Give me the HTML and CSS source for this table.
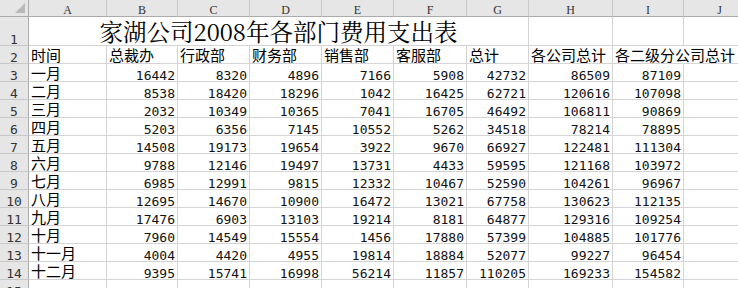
FILE: index.html
```html
<!DOCTYPE html>
<html lang="zh-CN">
<head>
<meta charset="utf-8">
<title>家湖公司2008年各部门费用支出表</title>
<link rel="stylesheet" href="styles.css">
</head>
<body>
<div class="sheet">
  <div class="corner"><svg width="28" height="16" viewBox="0 0 28 16"><polygon points="25,3 25,13 15,13" fill="#b9b9b9"/></svg></div>
  <div class="ch">A</div><div class="ch">B</div><div class="ch">C</div><div class="ch">D</div><div class="ch">E</div><div class="ch">F</div><div class="ch">G</div><div class="ch">H</div><div class="ch">I</div><div class="ch">J</div>

  <div class="rh r1">1</div>
  <div class="c title">家湖公司2008年各部门费用支出表</div>
  <div class="c r1"></div><div class="c r1"></div><div class="c r1"></div>

  <div class="rh">2</div>
  <div class="c">时间</div><div class="c">总裁办</div><div class="c">行政部</div><div class="c">财务部</div><div class="c">销售部</div><div class="c">客服部</div><div class="c">总计</div><div class="c">各公司总计</div><div class="c spill">各二级分公司总计</div><div class="c"></div>

  <div class="rh">3</div>
  <div class="c">一月</div><div class="c n">16442</div><div class="c n">8320</div><div class="c n">4896</div><div class="c n">7166</div><div class="c n">5908</div><div class="c n">42732</div><div class="c n">86509</div><div class="c n">87109</div><div class="c"></div>

  <div class="rh">4</div>
  <div class="c">二月</div><div class="c n">8538</div><div class="c n">18420</div><div class="c n">18296</div><div class="c n">1042</div><div class="c n">16425</div><div class="c n">62721</div><div class="c n">120616</div><div class="c n">107098</div><div class="c"></div>

  <div class="rh">5</div>
  <div class="c">三月</div><div class="c n">2032</div><div class="c n">10349</div><div class="c n">10365</div><div class="c n">7041</div><div class="c n">16705</div><div class="c n">46492</div><div class="c n">106811</div><div class="c n">90869</div><div class="c"></div>

  <div class="rh">6</div>
  <div class="c">四月</div><div class="c n">5203</div><div class="c n">6356</div><div class="c n">7145</div><div class="c n">10552</div><div class="c n">5262</div><div class="c n">34518</div><div class="c n">78214</div><div class="c n">78895</div><div class="c"></div>

  <div class="rh">7</div>
  <div class="c">五月</div><div class="c n">14508</div><div class="c n">19173</div><div class="c n">19654</div><div class="c n">3922</div><div class="c n">9670</div><div class="c n">66927</div><div class="c n">122481</div><div class="c n">111304</div><div class="c"></div>

  <div class="rh">8</div>
  <div class="c">六月</div><div class="c n">9788</div><div class="c n">12146</div><div class="c n">19497</div><div class="c n">13731</div><div class="c n">4433</div><div class="c n">59595</div><div class="c n">121168</div><div class="c n">103972</div><div class="c"></div>

  <div class="rh">9</div>
  <div class="c">七月</div><div class="c n">6985</div><div class="c n">12991</div><div class="c n">9815</div><div class="c n">12332</div><div class="c n">10467</div><div class="c n">52590</div><div class="c n">104261</div><div class="c n">96967</div><div class="c"></div>

  <div class="rh">10</div>
  <div class="c">八月</div><div class="c n">12695</div><div class="c n">14670</div><div class="c n">10900</div><div class="c n">16472</div><div class="c n">13021</div><div class="c n">67758</div><div class="c n">130623</div><div class="c n">112135</div><div class="c"></div>

  <div class="rh">11</div>
  <div class="c">九月</div><div class="c n">17476</div><div class="c n">6903</div><div class="c n">13103</div><div class="c n">19214</div><div class="c n">8181</div><div class="c n">64877</div><div class="c n">129316</div><div class="c n">109254</div><div class="c"></div>

  <div class="rh">12</div>
  <div class="c">十月</div><div class="c n">7960</div><div class="c n">14549</div><div class="c n">15554</div><div class="c n">1456</div><div class="c n">17880</div><div class="c n">57399</div><div class="c n">104885</div><div class="c n">101776</div><div class="c"></div>

  <div class="rh">13</div>
  <div class="c">十一月</div><div class="c n">4004</div><div class="c n">4420</div><div class="c n">4955</div><div class="c n">19814</div><div class="c n">18884</div><div class="c n">52077</div><div class="c n">99227</div><div class="c n">96454</div><div class="c"></div>

  <div class="rh">14</div>
  <div class="c">十二月</div><div class="c n">9395</div><div class="c n">15741</div><div class="c n">16998</div><div class="c n">56214</div><div class="c n">11857</div><div class="c n">110205</div><div class="c n">169233</div><div class="c n">154582</div><div class="c"></div>

  <div class="rh">15</div>
  <div class="c"></div><div class="c"></div><div class="c"></div><div class="c"></div><div class="c"></div><div class="c"></div><div class="c"></div><div class="c"></div><div class="c"></div><div class="c"></div>
</div>
</body>
</html>
```

FILE: styles.css
```css
html, body {
  margin: 0;
  padding: 0;
  background: #ffffff;
  overflow: hidden;
}

.sheet {
  display: grid;
  grid-template-columns: 29px 78px 71px 72px 72px 72px 73px 62px 84px 71px 72px;
  grid-template-rows: 17px 29px repeat(14, 18px);
  width: max-content;
}

.corner,
.ch,
.rh {
  box-sizing: border-box;
  background: #e6e6e6;
  color: #333333;
}

.corner {
  border-right: 1px solid #ababab;
  border-bottom: 1px solid #ababab;
}

.corner svg {
  display: block;
}

.ch {
  border-right: 1px solid #c8c8c8;
  border-bottom: 1px solid #ababab;
  display: flex;
  align-items: flex-end;
  justify-content: center;
  font-family: "Liberation Serif", serif;
  font-size: 12px;
  line-height: 12px;
}

.rh {
  border-right: 1px solid #ababab;
  border-bottom: 1px solid #c8c8c8;
  display: flex;
  align-items: flex-end;
  justify-content: center;
  font-family: "DejaVu Sans Mono", monospace;
  font-size: 13px;
  line-height: 10px;
}

.c {
  box-sizing: border-box;
  border-right: 1px solid #d4d4d4;
  border-bottom: 1px solid #d4d4d4;
  white-space: nowrap;
  display: flex;
  align-items: flex-end;
  padding: 0 2px;
  font-family: "Noto Sans CJK SC", sans-serif;
  font-size: 15px;
  line-height: 17px;
  color: #000000;
  min-width: 0;
}

.c.n {
  justify-content: flex-end;
  font-family: "DejaVu Sans Mono", monospace;
  font-size: 13px;
  line-height: 10px;
  padding-right: 2px;
  color: #111111;
}

.c.spill {
  border-right-color: transparent;
}

.c.title {
  grid-column: span 7;
  justify-content: center;
  font-family: "Noto Serif CJK SC", "Noto Sans CJK SC", serif;
  font-size: 23.5px;
  line-height: 28px;
}
```
